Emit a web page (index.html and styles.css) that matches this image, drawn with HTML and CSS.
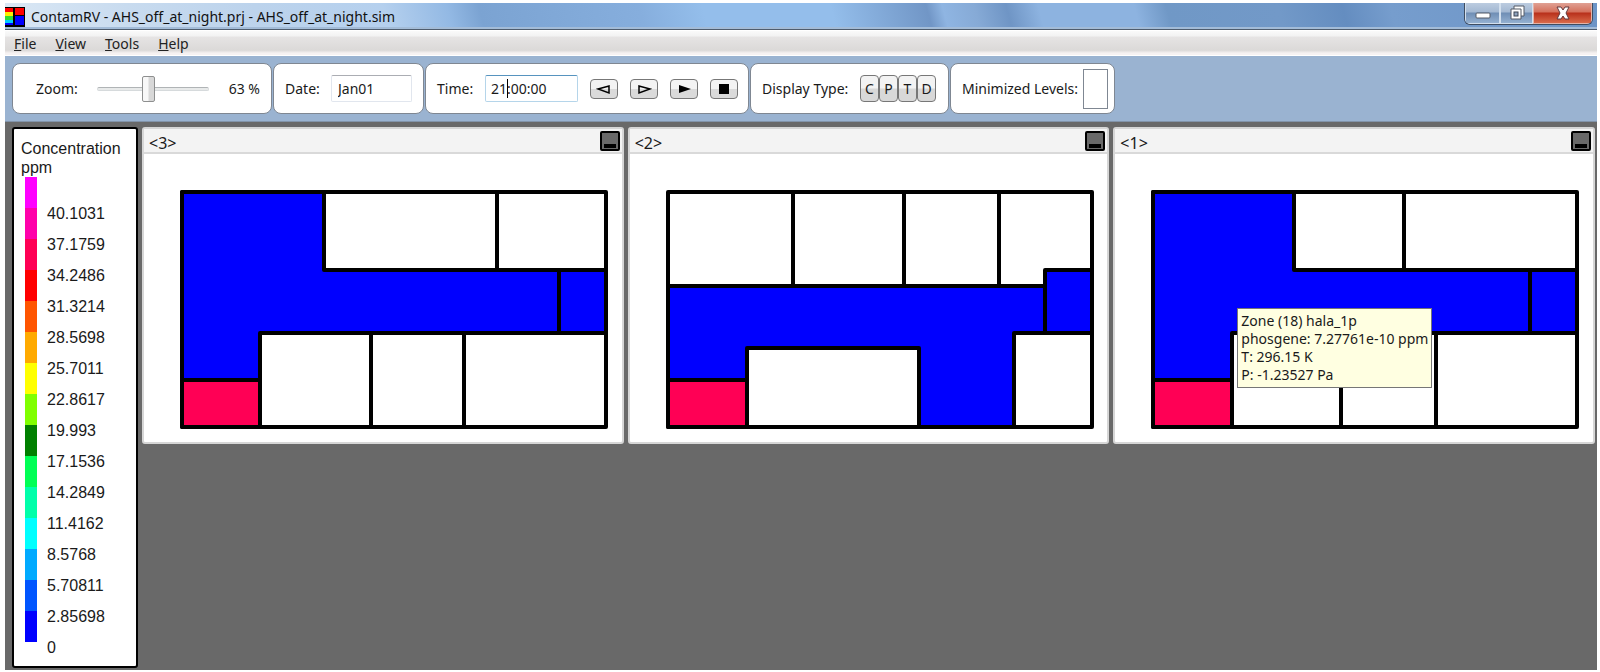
FILE: index.html
```
<!DOCTYPE html>
<html lang="en">
<head>
  <meta charset="utf-8">
  <title>ContamRV - AHS_off_at_night.prj - AHS_off_at_night.sim</title>
  <link rel="stylesheet" href="styles.css">
</head>
<body>
  <div class="window">
    <header class="titlebar">
      <svg class="app-icon" width="20" height="20" viewBox="0 0 20 20">
        <rect width="20" height="20" fill="#000"/>
        <rect x="0" y="1" width="8" height="4" fill="#f00"/>
        <rect x="0" y="5" width="8" height="4" fill="#fe0"/>
        <rect x="0" y="9" width="8" height="4" fill="#3d3"/>
        <rect x="0" y="13" width="8" height="3" fill="#0cf"/>
        <rect x="0" y="16" width="8" height="2" fill="#00f"/>
        <rect x="10" y="1" width="9" height="7" fill="#f00"/>
        <rect x="10" y="9" width="9" height="9" fill="#00f"/>
      </svg>
      <h1 class="title">ContamRV - AHS_off_at_night.prj - AHS_off_at_night.sim</h1>
      <div class="window-buttons">
        <button class="win-btn win-min" aria-label="Minimize">
          <svg width="16" height="16" viewBox="0 0 16 16"><rect x="1" y="8" width="14" height="5" rx="1" fill="#fff" stroke="#555b66"/></svg>
        </button>
        <button class="win-btn win-restore" aria-label="Restore">
          <svg width="16" height="16" viewBox="0 0 16 16">
            <path d="M5 1h10v10h-3v3H2V4h3z" fill="#fff" stroke="#555b66"/>
            <path d="M5 4h7v7" fill="none" stroke="#555b66"/>
            <rect x="5" y="7" width="4" height="4" fill="#8fa3bd" stroke="#3d4552"/>
          </svg>
        </button>
        <button class="win-btn win-close" aria-label="Close">
          <svg width="16" height="14" viewBox="0 0 16 14"><path d="M2 1h4l2 3 2-3h4l-3 6 3 6h-4L8 10l-2 3H2l3-6z" fill="#fff" stroke="#63393d"/></svg>
        </button>
      </div>
    </header>

    <nav class="menubar">
      <a href="#file"><u>F</u>ile</a>
      <a href="#view"><u>V</u>iew</a>
      <a href="#tools"><u>T</u>ools</a>
      <a href="#help"><u>H</u>elp</a>
    </nav>

    <div class="toolbar">
      <div class="group group-zoom">
        <label for="zoom">Zoom:</label>
        <input type="range" id="zoom" min="0" max="140" value="63">
        <output for="zoom">63 %</output>
      </div>
      <div class="group group-date">
        <label for="date">Date:</label>
        <input type="text" class="field" id="date" value="Jan01">
      </div>
      <div class="group group-time">
        <label for="time">Time:</label>
        <span class="time-box"><input type="text" class="field active" id="time" value="21:00:00"></span>
        <div class="play-buttons">
          <button class="play-btn" aria-label="Step back">
            <svg width="16" height="12" viewBox="0 0 16 12"><path d="M2 6l11-3v7z" fill="none" stroke="#000" stroke-width="1.5"/></svg>
          </button>
          <button class="play-btn" aria-label="Step forward">
            <svg width="16" height="12" viewBox="0 0 16 12"><path d="M14 6L3 3v7z" fill="none" stroke="#000" stroke-width="1.5"/></svg>
          </button>
          <button class="play-btn" aria-label="Play">
            <svg width="16" height="12" viewBox="0 0 16 12"><path d="M15 6L3 2v8z"/></svg>
          </button>
          <button class="play-btn" aria-label="Stop">
            <svg width="16" height="12" viewBox="0 0 16 12"><rect x="3" y="1" width="10" height="10"/></svg>
          </button>
        </div>
      </div>
      <div class="group group-display">
        <span class="group-label">Display Type:</span>
        <div class="type-buttons">
          <button class="type-btn">C</button>
          <button class="type-btn">P</button>
          <button class="type-btn">T</button>
          <button class="type-btn">D</button>
        </div>
      </div>
      <div class="group group-levels">
        <span class="group-label">Minimized Levels:</span>
        <div class="levels-box"></div>
      </div>
    </div>

    <main class="workspace">
      <aside class="legend">
        <h2>Concentration<br>ppm</h2>
        <div class="scale">
          <div class="colors">
            <i class="c15"></i><i class="c14"></i><i class="c13"></i><i class="c12"></i><i class="c11"></i>
            <i class="c10"></i><i class="c9"></i><i class="c8"></i><i class="c7"></i><i class="c6"></i>
            <i class="c5"></i><i class="c4"></i><i class="c3"></i><i class="c2"></i><i class="c1"></i>
          </div>
          <ul class="values">
            <li>40.1031</li>
            <li>37.1759</li>
            <li>34.2486</li>
            <li>31.3214</li>
            <li>28.5698</li>
            <li>25.7011</li>
            <li>22.8617</li>
            <li>19.993</li>
            <li>17.1536</li>
            <li>14.2849</li>
            <li>11.4162</li>
            <li>8.5768</li>
            <li>5.70811</li>
            <li>2.85698</li>
            <li>0</li>
          </ul>
        </div>
      </aside>

      <section class="level">
        <div class="level-head">
          <h3>&lt;3&gt;</h3>
          <button class="level-min" aria-label="Minimize level 3"></button>
        </div>
        <div class="level-body">
          <svg class="plan" width="428" height="239" viewBox="0 0 428 239">
            <rect class="room" x="2" y="2" width="424" height="235"/>
            <path class="air" d="M2 2H144V80H426V143H80V190H2z"/>
            <path class="gas" d="M2 190H80V237H2z"/>
            <path class="wall" d="M317 2V80M379 80V143M80 190V237M191 143V237M284 143V237"/>
            <rect class="wall" x="2" y="2" width="424" height="235"/>
          </svg>
        </div>
      </section>

      <section class="level">
        <div class="level-head">
          <h3>&lt;2&gt;</h3>
          <button class="level-min" aria-label="Minimize level 2"></button>
        </div>
        <div class="level-body">
          <svg class="plan" width="428" height="239" viewBox="0 0 428 239">
            <rect class="room" x="2" y="2" width="424" height="235"/>
            <path class="air" d="M2 96H379V143H348V237H253V158H81V190H2z"/>
            <path class="air" d="M379 80H426V143H379z"/>
            <path class="gas" d="M2 190H81V237H2z"/>
            <path class="wall" d="M127 2V96M238 2V96M333 2V96"/>
            <rect class="wall" x="2" y="2" width="424" height="235"/>
          </svg>
        </div>
      </section>

      <section class="level">
        <div class="level-head">
          <h3>&lt;1&gt;</h3>
          <button class="level-min" aria-label="Minimize level 1"></button>
        </div>
        <div class="level-body">
          <svg class="plan" width="428" height="239" viewBox="0 0 428 239">
            <rect class="room" x="2" y="2" width="424" height="235"/>
            <path class="air" d="M2 2H143V80H426V143H81V190H2z"/>
            <path class="gas" d="M2 190H81V237H2z"/>
            <path class="wall" d="M253 2V80M379 80V143M81 190V237M190 143V237M285 143V237"/>
            <rect class="wall" x="2" y="2" width="424" height="235"/>
          </svg>
          <div class="tooltip" role="tooltip">
            Zone (18) hala_1p<br>
            phosgene: 7.27761e-10 ppm<br>
            T: 296.15 K<br>
            P: -1.23527 Pa
          </div>
        </div>
      </section>
    </main>
  </div>
</body>
</html>
```

FILE: styles.css
```
* {
  box-sizing: border-box;
}

body {
  margin: 0;
  padding: 3px 3px 2px 5px;
  background: #fff;
  font-family: "Noto Sans", "Open Sans", sans-serif;
  font-size: 14px;
  color: #1a1a1a;
}

h1, h2, h3, ul {
  margin: 0;
  padding: 0;
  font-weight: normal;
}

button, input {
  font: inherit;
  color: inherit;
}

.window {
  display: flex;
  flex-direction: column;
  min-height: calc(100vh - 5px);
}

/* Title bar */
.titlebar {
  display: flex;
  align-items: flex-start;
  height: 27px;
  padding-right: 4px;
  border-bottom: 1px solid #4f5d6e;
  box-shadow: inset 0 -2px #a3bcd8;
  background: linear-gradient(75deg, #dbe8f5 0%, #c8dbef 8%, #bcd3ec 16%, #b5d0ee 24%, #93b9e4 28%, #7ba3d2 30%, #86aedd 40%, #94beeb 44%, #94beeb 52%, #7196c6 58%, #8fb5e2 59%, #86aad6 61%, #6f95c5 63%, #8db3e0 65%, #8db3e0 71%, #7098c6 73%, #7299c8 80%, #648dc0 84%, #769dcd 87%, #6c94c6 100%);
}

.app-icon {
  margin-top: 4px;
}

.title {
  flex: 1;
  margin-left: 6px;
  font-size: 14px;
  line-height: 27px;
  color: #111;
}

.window-buttons {
  display: flex;
  height: 22px;
  border: 1px solid #3f4d61;
  border-top: 0;
  border-radius: 0 0 6px 6px;
  overflow: hidden;
}

.win-btn {
  display: flex;
  align-items: center;
  justify-content: center;
  padding: 0;
  border: 1px solid #d3e0ee;
  border-top: 0;
  background: linear-gradient(#bccce0 0%, #a3b8d2 45%, #6f8eb5 50%, #94b0d0 100%);
}

.win-min {
  width: 35px;
}

.win-restore {
  width: 33px;
}

.win-close {
  width: 59px;
  border-color: #e5b3a8;
  background: linear-gradient(#e0a194 0%, #d4705c 45%, #b8301b 50%, #d96a4a 100%);
}

/* Menu */
.menubar {
  display: flex;
  gap: 19px;
  height: 26px;
  padding: 0 9px;
  border-top: 1px solid #fff;
  border-bottom: 1px solid #fff;
  background: linear-gradient(#fafafa 0%, #f2f2f2 22%, #e6e4e4 24%, #dbd9d8 80%, #f6f2f2 92%);
  line-height: 25px;
}

.menubar a {
  color: #222;
  text-decoration: none;
}

/* Toolbar */
.toolbar {
  display: flex;
  gap: 1px;
  padding: 7px;
  border-bottom: 1px solid #8294aa;
  background: #9ab3d1;
}

.group {
  display: flex;
  align-items: center;
  justify-content: space-between;
  height: 51px;
  border: 1px solid #7f8792;
  border-radius: 8px;
  background: #fff;
}

.group-zoom {
  width: 260px;
  padding: 0 11px 0 23px;
}

.group-date {
  width: 151px;
  padding: 0 11px;
}

.group-time {
  width: 324px;
  padding: 0 10px 0 11px;
}

.group-display {
  width: 199px;
  padding: 0 12px 0 11px;
}

.group-levels {
  width: 165px;
  padding: 0 6px 0 11px;
}

#zoom {
  appearance: none;
  width: 112px;
  height: 26px;
  margin: 0;
  background: transparent;
}

#zoom::-webkit-slider-runnable-track {
  height: 4px;
  border: 1px solid #d6dadc;
  border-top-color: #b0b4b6;
  border-radius: 2px;
  background: #e8eaea;
}

#zoom::-webkit-slider-thumb {
  appearance: none;
  width: 13px;
  height: 26px;
  margin-top: -12px;
  border: 1px solid #8e8f8f;
  border-radius: 2px;
  background: linear-gradient(90deg, #f8f8f8 45%, #d8d8d8 55%);
}

.field {
  display: block;
  width: 81px;
  height: 27px;
  padding: 0 6px;
  border: 1px solid #e1e6ee;
  border-top-color: #abadb3;
  border-radius: 2px;
  outline: 0;
  background: #fff;
}

.field.active {
  width: 93px;
  padding: 0 5px;
  border-color: #b5d5ea;
  border-top-color: #5794bf;
}

.time-box {
  position: relative;
}

/* text caret */
.time-box::after {
  content: "";
  position: absolute;
  left: 22px;
  top: 4px;
  width: 1px;
  height: 19px;
  background: #000;
}

.play-buttons {
  display: flex;
  gap: 12px;
}

.play-btn {
  display: flex;
  align-items: center;
  justify-content: center;
  width: 28px;
  height: 20px;
  padding: 0;
  border: 1px solid #777;
  border-radius: 4px;
  background: linear-gradient(#f3f3f3 48%, #dadada 52%);
}

.type-buttons {
  display: flex;
}

.type-btn {
  width: 19px;
  height: 27px;
  padding: 0;
  border: 1px solid #777;
  border-radius: 4px;
  background: linear-gradient(#f3f3f3 48%, #d8d8d8 52%);
}

.levels-box {
  width: 25px;
  height: 40px;
  border: 1px solid #7f8792;
}

/* Workspace */
.workspace {
  display: flex;
  flex: 1;
  gap: 4px;
  align-items: flex-start;
  padding: 5px 2px 2px 7px;
  background: #696969;
}

.legend {
  align-self: stretch;
  width: 126px;
  padding: 10px 7px 0;
  border: 2px solid #000;
  border-radius: 3px;
  background: #fff;
  font-family: "Liberation Sans", Arial, sans-serif;
  font-size: 16px;
}

.legend h2 {
  font-size: 16px;
  line-height: 19px;
}

.scale {
  display: flex;
  gap: 10px;
  padding-left: 4px;
}

.colors i {
  display: block;
  width: 12px;
  height: 31px;
}

.values {
  padding-top: 21px;
  list-style: none;
  line-height: 31px;
}

.c1 { background: #0000ff; }
.c2 { background: #0055ff; }
.c3 { background: #00aaff; }
.c4 { background: #00ffff; }
.c5 { background: #00ffaa; }
.c6 { background: #00ff55; }
.c7 { background: #008000; }
.c8 { background: #80ff00; }
.c9 { background: #ffff00; }
.c10 { background: #ffaa00; }
.c11 { background: #ff5500; }
.c12 { background: #ff0000; }
.c13 { background: #ff0055; }
.c14 { background: #ff00aa; }
.c15 { background: #ff00ff; }

/* Building levels */
.level {
  flex: 1;
  border: 2px solid #d6d6d6;
  border-radius: 3px;
  background: #fff;
}

.level-head {
  display: flex;
  align-items: center;
  justify-content: space-between;
  height: 25px;
  padding: 0 2px 0 5px;
  border-bottom: 2px solid #d9d9d9;
  background: #f3f3f3;
}

.level-head h3 {
  padding-top: 4px;
  font-size: 16px;
  line-height: 20px;
}

.level-min {
  display: flex;
  align-items: flex-end;
  justify-content: center;
  width: 20px;
  height: 20px;
  padding: 0 0 1px;
  border: 2px solid #000;
  border-radius: 2px;
  background: #696969;
}

.level-min::before {
  content: "";
  width: 12px;
  height: 4px;
  background: #000;
}

.level-body {
  position: relative;
  padding: 36px 12px 13px 36px;
}

.plan {
  display: block;
}

.room {
  fill: #fff;
}

.wall, .air, .gas {
  fill: none;
  stroke: #000;
  stroke-width: 4;
  stroke-linejoin: round;
}

.air {
  fill: #0000ff;
}

.gas {
  fill: #ff0055;
}

.tooltip {
  position: absolute;
  left: 122px;
  top: 154px;
  padding: 3px;
  border: 1px solid #767676;
  background: #ffffe1;
  font-size: 14px;
  line-height: 18px;
  white-space: nowrap;
}
```
